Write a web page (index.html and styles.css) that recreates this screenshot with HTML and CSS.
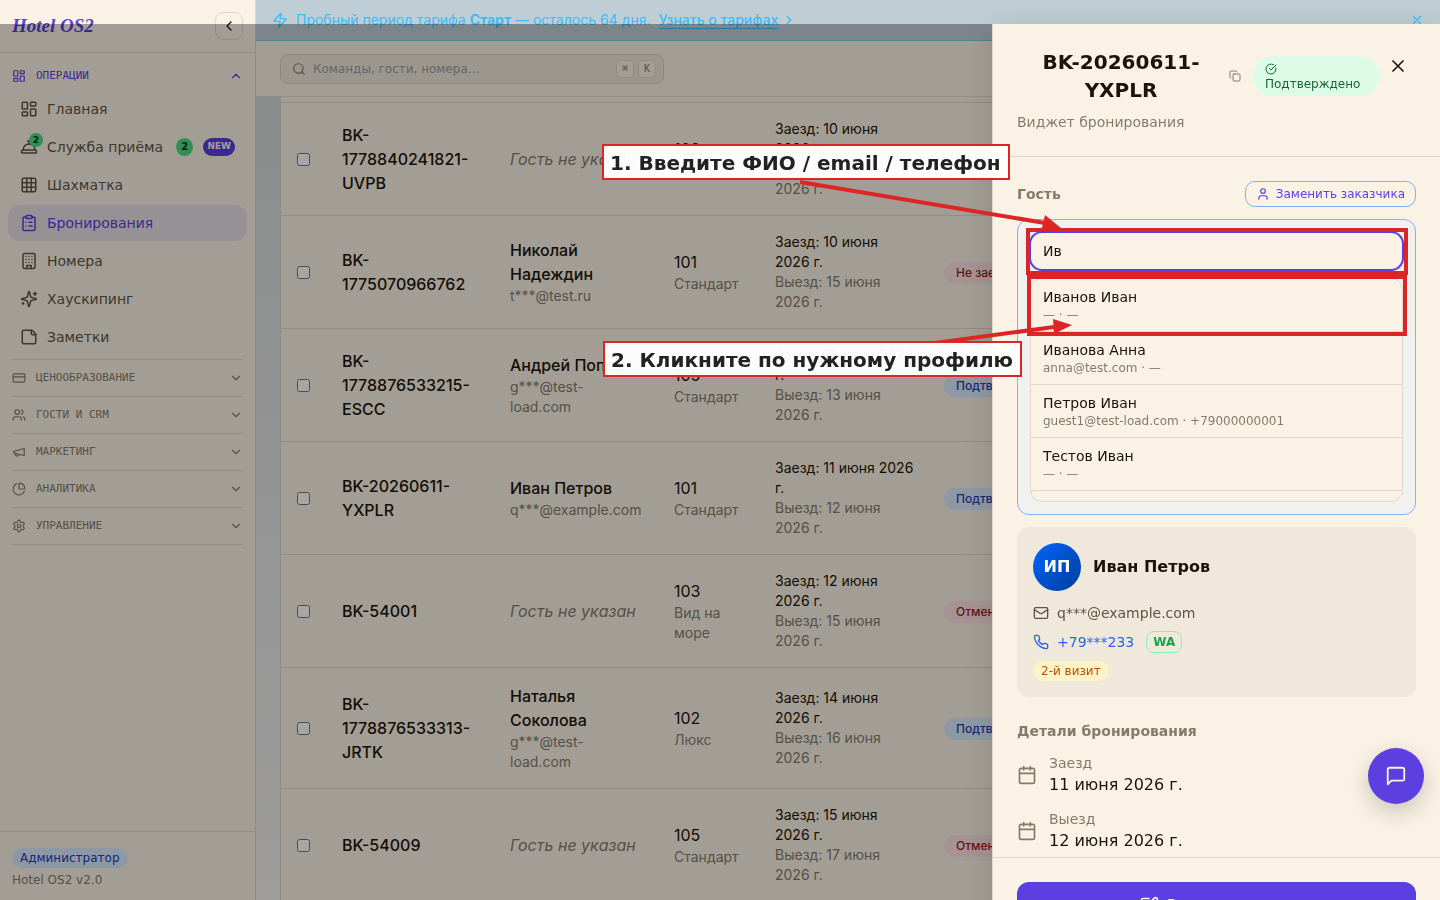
FILE: index.html
```html
<!DOCTYPE html>
<html lang="ru">
	<head>
		<meta charset="utf-8">
		<meta name="viewport" content="width=device-width, initial-scale=1">
		<title>Hotel OS2 - Бронирования</title>
		<link rel="stylesheet" href="styles.css">
	</head>
	<body>
		<svg class="sprite" aria-hidden="true">
			<symbol id="i-dash" viewBox="0 0 24 24"><rect x="3" y="3" width="7" height="9" rx="1"/><rect x="14" y="3" width="7" height="5" rx="1"/><rect x="14" y="12" width="7" height="9" rx="1"/><rect x="3" y="16" width="7" height="5" rx="1"/></symbol>
			<symbol id="i-bell" viewBox="0 0 24 24"><path d="M3 20a1 1 0 0 1-1-1v-1a2 2 0 0 1 2-2h16a2 2 0 0 1 2 2v1a1 1 0 0 1-1 1Z"/><path d="M20 16a8 8 0 1 0-16 0"/><path d="M12 4v4"/><path d="M10 4h4"/></symbol>
			<symbol id="i-grid" viewBox="0 0 24 24"><rect x="3" y="3" width="18" height="18" rx="2"/><path d="M3 9h18M3 15h18M9 3v18M15 3v18"/></symbol>
			<symbol id="i-clip" viewBox="0 0 24 24"><rect x="8" y="2" width="8" height="4" rx="1"/><path d="M16 4h2a2 2 0 0 1 2 2v14a2 2 0 0 1-2 2H6a2 2 0 0 1-2-2V6a2 2 0 0 1 2-2h2"/><path d="M12 11h4M12 16h4M8 11h.01M8 16h.01"/></symbol>
			<symbol id="i-build" viewBox="0 0 24 24"><rect x="4" y="2" width="16" height="20" rx="2"/><path d="M9 22v-4h6v4M8 6h.01M16 6h.01M12 6h.01M12 10h.01M12 14h.01M16 10h.01M16 14h.01M8 10h.01M8 14h.01"/></symbol>
			<symbol id="i-spark" viewBox="0 0 24 24"><path d="M9.937 15.5A2 2 0 0 0 8.5 14.063l-6.135-1.582a.5.5 0 0 1 0-.962L8.5 9.936A2 2 0 0 0 9.937 8.5l1.582-6.135a.5.5 0 0 1 .963 0L14.063 8.5A2 2 0 0 0 15.5 9.937l6.135 1.581a.5.5 0 0 1 0 .964L15.5 14.063a2 2 0 0 0-1.437 1.437l-1.582 6.135a.5.5 0 0 1-.963 0z"/><path d="M20 3v4M22 5h-4M4 17v2M5 18H3"/></symbol>
			<symbol id="i-note" viewBox="0 0 24 24"><path d="M16 3H5a2 2 0 0 0-2 2v14a2 2 0 0 0 2 2h14a2 2 0 0 0 2-2V8Z"/><path d="M15 3v4a2 2 0 0 0 2 2h4"/></symbol>
			<symbol id="i-card" viewBox="0 0 24 24"><rect x="2" y="5" width="20" height="14" rx="2"/><path d="M2 10h20"/></symbol>
			<symbol id="i-users" viewBox="0 0 24 24"><path d="M16 21v-2a4 4 0 0 0-4-4H6a4 4 0 0 0-4 4v2"/><circle cx="9" cy="7" r="4"/><path d="M22 21v-2a4 4 0 0 0-3-3.87M16 3.13a4 4 0 0 1 0 7.75"/></symbol>
			<symbol id="i-mega" viewBox="0 0 24 24"><path d="m3 11 18-5v12L3 14v-3z"/><path d="M11.6 16.8a3 3 0 1 1-5.8-1.6"/></symbol>
			<symbol id="i-pie" viewBox="0 0 24 24"><path d="M21 12c.552 0 1.005-.449.95-.998a10 10 0 0 0-8.953-8.951c-.55-.055-.998.398-.998.95v8a1 1 0 0 0 1 1z"/><path d="M21.21 15.89A10 10 0 1 1 8 2.83"/></symbol>
			<symbol id="i-gear" viewBox="0 0 24 24"><path d="M12.22 2h-.44a2 2 0 0 0-2 2v.18a2 2 0 0 1-1 1.73l-.43.25a2 2 0 0 1-2 0l-.15-.08a2 2 0 0 0-2.73.73l-.22.38a2 2 0 0 0 .73 2.73l.15.1a2 2 0 0 1 1 1.72v.51a2 2 0 0 1-1 1.74l-.15.09a2 2 0 0 0-.73 2.73l.22.38a2 2 0 0 0 2.73.73l.15-.08a2 2 0 0 1 2 0l.43.25a2 2 0 0 1 1 1.73V20a2 2 0 0 0 2 2h.44a2 2 0 0 0 2-2v-.18a2 2 0 0 1 1-1.73l.43-.25a2 2 0 0 1 2 0l.15.08a2 2 0 0 0 2.73-.73l.22-.39a2 2 0 0 0-.73-2.73l-.15-.08a2 2 0 0 1-1-1.74v-.5a2 2 0 0 1 1-1.74l.15-.09a2 2 0 0 0 .73-2.73l-.22-.38a2 2 0 0 0-2.73-.73l-.15.08a2 2 0 0 1-2 0l-.43-.25a2 2 0 0 1-1-1.73V4a2 2 0 0 0-2-2z"/><circle cx="12" cy="12" r="3"/></symbol>
			<symbol id="i-down" viewBox="0 0 24 24"><path d="m6 9 6 6 6-6"/></symbol>
			<symbol id="i-up" viewBox="0 0 24 24"><path d="m18 15-6-6-6 6"/></symbol>
			<symbol id="i-left" viewBox="0 0 24 24"><path d="m15 18-6-6 6-6"/></symbol>
			<symbol id="i-right" viewBox="0 0 24 24"><path d="m9 18 6-6-6-6"/></symbol>
			<symbol id="i-zap" viewBox="0 0 24 24"><path d="M4 14a1 1 0 0 1-.78-1.63l9.9-10.2a.5.5 0 0 1 .86.46l-1.92 6.02A1 1 0 0 0 13 10h7a1 1 0 0 1 .78 1.63l-9.9 10.2a.5.5 0 0 1-.86-.46l1.92-6.02A1 1 0 0 0 11 14z"/></symbol>
			<symbol id="i-x" viewBox="0 0 24 24"><path d="M18 6 6 18M6 6l12 12"/></symbol>
			<symbol id="i-search" viewBox="0 0 24 24"><circle cx="11" cy="11" r="8"/><path d="m21 21-4.3-4.3"/></symbol>
			<symbol id="i-copy" viewBox="0 0 24 24"><rect x="8" y="8" width="14" height="14" rx="2"/><path d="M4 16c-1.1 0-2-.9-2-2V4c0-1.1.9-2 2-2h10c1.1 0 2 .9 2 2"/></symbol>
			<symbol id="i-check" viewBox="0 0 24 24"><path d="M21.801 10A10 10 0 1 1 17 3.335"/><path d="m9 11 3 3L22 4"/></symbol>
			<symbol id="i-user" viewBox="0 0 24 24"><path d="M19 21v-2a4 4 0 0 0-4-4H9a4 4 0 0 0-4 4v2"/><circle cx="12" cy="7" r="4"/></symbol>
			<symbol id="i-mail" viewBox="0 0 24 24"><rect x="2" y="4" width="20" height="16" rx="2"/><path d="m22 7-8.97 5.7a1.94 1.94 0 0 1-2.06 0L2 7"/></symbol>
			<symbol id="i-phone" viewBox="0 0 24 24"><path d="M22 16.92v3a2 2 0 0 1-2.18 2 19.79 19.79 0 0 1-8.63-3.07 19.5 19.5 0 0 1-6-6 19.79 19.79 0 0 1-3.07-8.67A2 2 0 0 1 4.11 2h3a2 2 0 0 1 2 1.72 12.84 12.84 0 0 0 .7 2.81 2 2 0 0 1-.45 2.11L8.09 9.91a16 16 0 0 0 6 6l1.27-1.27a2 2 0 0 1 2.11-.45 12.84 12.84 0 0 0 2.81.7A2 2 0 0 1 22 16.92z"/></symbol>
			<symbol id="i-cal" viewBox="0 0 24 24"><path d="M8 2v4M16 2v4M3 10h18"/><rect x="3" y="4" width="18" height="18" rx="2"/></symbol>
			<symbol id="i-pen" viewBox="0 0 24 24"><path d="M12 3H5a2 2 0 0 0-2 2v14a2 2 0 0 0 2 2h14a2 2 0 0 0 2-2v-7"/><path d="M18.375 2.625a1 1 0 0 1 3 3l-9.013 9.014a2 2 0 0 1-.853.505l-2.873.84a.5.5 0 0 1-.62-.62l.84-2.873a2 2 0 0 1 .506-.852z"/></symbol>
			<symbol id="i-chat" viewBox="0 0 24 24"><path d="M21 15a2 2 0 0 1-2 2H7l-4 4V5a2 2 0 0 1 2-2h14a2 2 0 0 1 2 2z"/></symbol>
		</svg>

		<div class="app">
			<aside class="sidebar">
				<div class="brand">
					<a class="logo" href="#">Hotel OS2</a>
					<button class="collapse" aria-label="Свернуть меню"><svg class="icon s16"><use href="#i-left"/></svg></button>
				</div>
				<nav class="menu">
					<div class="section open">
						<button class="section-head"><svg class="icon s14"><use href="#i-dash"/></svg><span>ОПЕРАЦИИ</span><svg class="icon s14"><use href="#i-up"/></svg></button>
						<a class="item" href="#"><svg class="icon s18"><use href="#i-dash"/></svg>Главная</a>
						<a class="item" href="#"><span class="bell"><svg class="icon s18"><use href="#i-bell"/></svg><b class="dot">2</b></span>Служба приёма<b class="count">2</b><b class="new">NEW</b></a>
						<a class="item" href="#"><svg class="icon s18"><use href="#i-grid"/></svg>Шахматка</a>
						<a class="item active" href="#"><svg class="icon s18"><use href="#i-clip"/></svg>Бронирования</a>
						<a class="item" href="#"><svg class="icon s18"><use href="#i-build"/></svg>Номера</a>
						<a class="item" href="#"><svg class="icon s18"><use href="#i-spark"/></svg>Хаускипинг</a>
						<a class="item" href="#"><svg class="icon s18"><use href="#i-note"/></svg>Заметки</a>
					</div>
					<div class="section"><button class="section-head"><svg class="icon s14"><use href="#i-card"/></svg><span>ЦЕНООБРАЗОВАНИЕ</span><svg class="icon s14"><use href="#i-down"/></svg></button></div>
					<div class="section"><button class="section-head"><svg class="icon s14"><use href="#i-users"/></svg><span>ГОСТИ И CRM</span><svg class="icon s14"><use href="#i-down"/></svg></button></div>
					<div class="section"><button class="section-head"><svg class="icon s14"><use href="#i-mega"/></svg><span>МАРКЕТИНГ</span><svg class="icon s14"><use href="#i-down"/></svg></button></div>
					<div class="section"><button class="section-head"><svg class="icon s14"><use href="#i-pie"/></svg><span>АНАЛИТИКА</span><svg class="icon s14"><use href="#i-down"/></svg></button></div>
					<div class="section"><button class="section-head"><svg class="icon s14"><use href="#i-gear"/></svg><span>УПРАВЛЕНИЕ</span><svg class="icon s14"><use href="#i-down"/></svg></button></div>
				</nav>
				<div class="side-foot">
					<span class="role">Администратор</span>
					<span class="version">Hotel OS2 v2.0</span>
				</div>
			</aside>

			<main class="main">
				<div class="trial">
					<svg class="icon s16"><use href="#i-zap"/></svg>
					<p>Пробный период тарифа <b>Старт</b> — осталось 64 дня.</p>
					<a href="#">Узнать о тарифах</a>
					<svg class="icon s14"><use href="#i-right"/></svg>
					<button class="trial-close" aria-label="Закрыть"><svg class="icon s14"><use href="#i-x"/></svg></button>
				</div>
				<header class="topbar">
					<div class="search">
						<svg class="icon s14"><use href="#i-search"/></svg>
						<input type="text" placeholder="Команды, гости, номера…" aria-label="Поиск">
						<kbd>⌘</kbd><kbd>K</kbd>
					</div>
				</header>
				<div class="content">
					<div class="panel">
						<table class="bookings">
							<colgroup><col class="c-check"><col class="c-code"><col class="c-guest"><col class="c-room"><col class="c-dates"><col></colgroup>
							<tbody>
								<tr>
									<td><input type="checkbox" aria-label="BK-1778840241821-UVPB"></td>
									<td class="code">BK-<wbr>1778840241821-UVPB</td>
									<td><i class="none">Гость не указан</i></td>
									<td>102<small>Люкс</small></td>
									<td class="dates">Заезд: 10 июня 2026 г.<small>Выезд: 12 июня 2026 г.</small></td>
									<td><span class="status bad">Не заезд</span></td>
								</tr>
								<tr>
									<td><input type="checkbox" aria-label="BK-1775070966762"></td>
									<td class="code">BK-<wbr>1775070966762</td>
									<td><span class="guest">Николай Надеждин</span><small>t***@test.ru</small></td>
									<td>101<small>Стандарт</small></td>
									<td class="dates">Заезд: 10 июня 2026 г.<small>Выезд: 15 июня 2026 г.</small></td>
									<td><span class="status bad">Не заезд</span></td>
								</tr>
								<tr>
									<td><input type="checkbox" aria-label="BK-1778876533215-ESCC"></td>
									<td class="code">BK-<wbr>1778876533215-ESCC</td>
									<td><span class="guest">Андрей Попов</span><small>g***@test-load.com</small></td>
									<td>105<small>Стандарт</small></td>
									<td class="dates">Заезд: 11 июня 2026 г.<small>Выезд: 13 июня 2026 г.</small></td>
									<td><span class="status ok">Подтверждено</span></td>
								</tr>
								<tr>
									<td><input type="checkbox" aria-label="BK-20260611-YXPLR"></td>
									<td class="code">BK-20260611-YXPLR</td>
									<td><span class="guest">Иван Петров</span><small>q***@example.com</small></td>
									<td>101<small>Стандарт</small></td>
									<td class="dates">Заезд: 11 июня 2026 г.<small>Выезд: 12 июня 2026 г.</small></td>
									<td><span class="status ok">Подтверждено</span></td>
								</tr>
								<tr>
									<td><input type="checkbox" aria-label="BK-54001"></td>
									<td class="code">BK-54001</td>
									<td><i class="none">Гость не указан</i></td>
									<td>103<small>Вид на море</small></td>
									<td class="dates">Заезд: 12 июня 2026 г.<small>Выезд: 15 июня 2026 г.</small></td>
									<td><span class="status bad">Отменено</span></td>
								</tr>
								<tr>
									<td><input type="checkbox" aria-label="BK-1778876533313-JRTK"></td>
									<td class="code">BK-<wbr>1778876533313-JRTK</td>
									<td><span class="guest">Наталья Соколова</span><small>g***@test-load.com</small></td>
									<td>102<small>Люкс</small></td>
									<td class="dates">Заезд: 14 июня 2026 г.<small>Выезд: 16 июня 2026 г.</small></td>
									<td><span class="status ok">Подтверждено</span></td>
								</tr>
								<tr>
									<td><input type="checkbox" aria-label="BK-54009"></td>
									<td class="code">BK-54009</td>
									<td><i class="none">Гость не указан</i></td>
									<td>105<small>Стандарт</small></td>
									<td class="dates">Заезд: 15 июня 2026 г.<small>Выезд: 17 июня 2026 г.</small></td>
									<td><span class="status bad">Отменено</span></td>
								</tr>
							</tbody>
						</table>
					</div>
				</div>
			</main>
		</div>

		<div class="overlay"></div>

		<section class="drawer" role="dialog" aria-labelledby="bk">
			<header class="drawer-head">
				<div class="head-row">
					<button class="title" id="bk"><span>BK-20260611-YXPLR</span><svg class="icon s12"><use href="#i-copy"/></svg></button>
					<span class="confirmed"><svg class="icon s12"><use href="#i-check"/></svg>Подтверждено</span>
					<button class="close" aria-label="Закрыть"><svg class="icon s20"><use href="#i-x"/></svg></button>
				</div>
				<p>Виджет бронирования</p>
			</header>
			<div class="drawer-body">
				<div class="block-head">
					<h3>Гость</h3>
					<button class="replace"><svg class="icon s14"><use href="#i-user"/></svg>Заменить заказчика</button>
				</div>
				<div class="picker">
					<input type="text" value="Ив" aria-label="ФИО, email или телефон">
					<ul class="matches">
						<li><button>Иванов Иван<small>— · —</small></button></li>
						<li><button>Иванова Анна<small>anna@test.com · —</small></button></li>
						<li><button>Петров Иван<small>guest1@test-load.com · +79000000001</small></button></li>
						<li><button>Тестов Иван<small>— · —</small></button></li>
					</ul>
				</div>
				<div class="card">
					<div class="person"><span class="avatar">ИП</span><strong>Иван Петров</strong></div>
					<div class="contact"><svg class="icon s16"><use href="#i-mail"/></svg>q***@example.com</div>
					<div class="contact"><a class="tel" href="#"><svg class="icon s16"><use href="#i-phone"/></svg>+79***233</a><a class="wa" href="#">WA</a></div>
					<span class="visit">2-й визит</span>
				</div>
				<h3>Детали бронирования</h3>
				<dl class="details">
					<div><svg class="icon s20"><use href="#i-cal"/></svg><dt>Заезд</dt><dd>11 июня 2026 г.</dd></div>
					<div><svg class="icon s20"><use href="#i-cal"/></svg><dt>Выезд</dt><dd>12 июня 2026 г.</dd></div>
				</dl>
			</div>
			<footer class="drawer-foot">
				<button class="primary"><svg class="icon s20"><use href="#i-pen"/></svg>Редактировать</button>
			</footer>
		</section>

		<button class="fab" aria-label="Чат"><svg class="icon s22"><use href="#i-chat"/></svg></button>

		<!-- tutorial callouts, pinned to the drawer edge -->
		<div class="guide">
			<div class="frame frame1"></div>
			<div class="frame frame2"></div>
			<svg class="arrows" viewBox="0 0 840 400">
				<path class="shaft" d="M200 182 L445 223 M335 343 L454 327"/>
				<path class="head" d="M445 215 L461 228 L441 232 Z M453 319 L472 325 L454 334 Z"/>
			</svg>
			<div class="note note1">1. Введите ФИО / email / телефон</div>
			<div class="note note2">2. Кликните по нужному профилю</div>
		</div>
	</body>
</html>
```
FILE: styles.css
```css
* {
  box-sizing: border-box;
}

html, body {
  height: 100%;
}

body {
  margin: 0;
  overflow: hidden;
  font-family: "DejaVu Sans", sans-serif;
  font-size: 14px;
  line-height: 20px;
  color: #1c1409;
  background: linear-gradient(#d0d7d6, #e1e3e4 50%, #f3f1ef);
}

h3, p, ul, dl, dd {
  margin: 0;
  padding: 0;
}

button, input {
  font: inherit;
  color: inherit;
}

button {
  padding: 0;
  border: 0;
  background: none;
  cursor: pointer;
}

a {
  color: inherit;
  text-decoration: none;
}

small {
  display: block;
}

.sprite {
  display: none;
}

.icon {
  flex: none;
  fill: none;
  stroke: currentColor;
  stroke-width: 2;
  stroke-linecap: round;
  stroke-linejoin: round;
}

.s12 { width: 12px; height: 12px; }
.s14 { width: 14px; height: 14px; }
.s16 { width: 16px; height: 16px; }
.s18 { width: 18px; height: 18px; }
.s20 { width: 20px; height: 20px; }
.s22 { width: 22px; height: 22px; }

.app {
  display: flex;
  height: 100%;
}

/* sidebar */

.sidebar {
  display: flex;
  flex-direction: column;
  flex: none;
  width: 256px;
  background: #faf3e5;
  border-right: 1px solid #e0d9c9;
}

.brand {
  display: flex;
  align-items: center;
  justify-content: space-between;
  padding: 12px;
  border-bottom: 1px solid #e0d9c9;
}

.logo {
  font: italic bold 19px/28px "Liberation Serif", serif;
  color: #5b3fe0;
}

.collapse {
  display: flex;
  align-items: center;
  justify-content: center;
  width: 28px;
  height: 28px;
  border: 1px solid #e0d9c9;
  border-radius: 8px;
}

.menu {
  flex: 1;
  padding: 8px 12px;
  color: #5e5546;
}

.section {
  border-bottom: 1px solid #e0d9c9;
}

.section-head {
  display: flex;
  align-items: center;
  gap: 10px;
  width: 100%;
  height: 36px;
  font: 11px/16px "DejaVu Sans Mono", monospace;
  color: #857b6d;
  text-align: left;
}

.section-head span {
  flex: 1;
}

.open {
  padding-bottom: 4px;
}

.open .section-head {
  height: 30px;
  color: #5b3fe0;
}

.item {
  display: flex;
  align-items: center;
  gap: 9px;
  height: 36px;
  margin: 0 -4px 2px;
  padding: 0 12px;
  border-radius: 12px;
  white-space: nowrap;
}

.item:last-child {
  margin-bottom: 0;
}

.active {
  color: #5b3fe0;
  background: #e6dfe3;
}

.bell {
  display: flex;
  position: relative;
}

.dot, .count {
  display: flex;
  align-items: center;
  justify-content: center;
  border-radius: 50%;
  color: #14301f;
  background: #4ade80;
}

.dot {
  position: absolute;
  top: -5px;
  right: -5px;
  width: 14px;
  height: 14px;
  font-size: 9px;
  line-height: 12px;
}

.count {
  width: 18px;
  height: 18px;
  margin-left: 4px;
  font-size: 10px;
}

.new {
  height: 18px;
  margin-left: 1px;
  padding: 0 4px;
  border-radius: 9px;
  font-size: 9px;
  line-height: 16px;
  color: #faf3e5;
  background: #5b3fe0;
}

.side-foot {
  display: flex;
  flex-direction: column;
  align-items: flex-start;
  gap: 4px;
  padding: 16px 12px 12px;
  border-top: 1px solid #e0d9c9;
  font-size: 12px;
  line-height: 16px;
  color: #857b6d;
}

.role {
  padding: 2px 8px;
  border-radius: 10px;
  color: #1e40af;
  background: #dbeafe;
}

/* main */

.main {
  display: flex;
  flex-direction: column;
  flex: 1;
  min-width: 0;
  font-family: Inter, sans-serif;
}

.trial {
  display: flex;
  align-items: center;
  gap: 8px;
  flex: none;
  padding: 10px 16px;
  border-bottom: 1px solid #7cc4e8;
  color: #38bdf8;
  background: #bfcdd4;
}

.trial a {
  font-weight: 500;
  text-decoration: underline;
  text-underline-offset: 3px;
}

.trial a + svg {
  margin-left: -4px;
}

.trial-close {
  display: flex;
  margin-left: auto;
}

.topbar {
  flex: none;
  padding: 13px 24px 12px;
  border-bottom: 1px solid #e0d9c9;
  background: #faf3e5;
}

.search {
  display: flex;
  align-items: center;
  gap: 4px;
  max-width: 384px;
  height: 30px;
  padding: 0 7px 0 11px;
  border: 1px solid #d9d1c0;
  border-radius: 8px;
  font: 12px/16px "DejaVu Sans", sans-serif;
  color: #857b6d;
  background: #efe8da;
}

.search input {
  flex: 1;
  min-width: 0;
  padding: 0 3px;
  border: 0;
  outline: 0;
  background: none;
}

.search input::placeholder {
  color: #9a9ca3;
}

kbd {
  min-width: 18px;
  padding: 0 4px;
  border: 1px solid #e0d9c9;
  border-radius: 4px;
  font: 10px/16px "DejaVu Sans Mono", monospace;
  text-align: center;
  background: #faf3e5;
}

.content {
  flex: 1;
  min-height: 0;
  padding: 0 24px;
  overflow: hidden;
}

.panel {
  padding-top: 5px;
  border: solid #e0d9c9;
  border-width: 0 1px;
  background: #faf3e5;
}

.bookings {
  width: 100%;
  table-layout: fixed;
  border-collapse: separate;
  border-spacing: 0;
  font-size: 16px;
  line-height: 24px;
}

.c-check { width: 45px; }
.c-code { width: 168px; }
.c-guest { width: 164px; }
.c-room { width: 101px; }
.c-dates { width: 169px; }

.bookings td {
  padding: 16px;
  border-top: 1px solid #e0d9c9;
  vertical-align: middle;
}

.bookings input {
  display: block;
  width: 13px;
  height: 13px;
  margin: 0;
}

.bookings small, .bookings .dates {
  font-size: 14px;
  line-height: 20px;
}

.bookings .dates {
  padding-right: 14px;
}

.bookings small, .none {
  color: #857b6d;
}

.code, .guest {
  font-weight: 500;
}

.status {
  display: inline-block;
  padding: 3px 12px;
  border-radius: 11px;
  font-size: 12px;
  font-weight: 500;
  line-height: 16px;
  vertical-align: middle;
}

.bad {
  color: #991b1b;
  background: #ffe0e2;
}

.ok {
  color: #1e40af;
  background: #dbeafe;
}

.overlay {
  position: fixed;
  top: 24px;
  left: 0;
  right: 0;
  bottom: 0;
  background: rgba(0,0,0,.35);
}

/* booking drawer */

.drawer {
  display: flex;
  flex-direction: column;
  position: fixed;
  top: 24px;
  right: 0;
  bottom: -54px;
  width: 448px;
  max-width: 100%;
  border-left: 1px solid #e0d9c9;
  background: #faf3e5;
  box-shadow: 0 8px 32px rgba(0,0,0,.15);
}

.drawer-head {
  padding: 24px;
  border-bottom: 1px solid #e0d9c9;
  color: #857b6d;
}

.head-row {
  display: flex;
  align-items: center;
  margin-bottom: 8px;
}

.title {
  display: flex;
  align-items: center;
  gap: 4px;
  flex: 1;
}

.title span {
  flex: 1;
  font-size: 20px;
  font-weight: bold;
  line-height: 28px;
  color: #1c1409;
}

.confirmed {
  width: 127px;
  margin-left: 12px;
  padding: 4px 12px;
  border-radius: 20px;
  font-size: 12px;
  line-height: 16px;
  color: #166534;
  background: #dcfce7;
}

.confirmed svg {
  display: block;
  margin: 3px 0 1px;
}

.close {
  display: flex;
  align-items: center;
  justify-content: center;
  align-self: flex-start;
  width: 36px;
  height: 36px;
  color: #1c1409;
}

.drawer-body {
  flex: 1;
  min-height: 0;
  padding: 24px;
  overflow: hidden;
}

.drawer-body h3 {
  font-size: 14px;
  line-height: 20px;
  color: #857b6d;
}

.block-head {
  display: flex;
  align-items: center;
  justify-content: space-between;
  margin-bottom: 12px;
}

.replace {
  display: flex;
  align-items: center;
  gap: 6px;
  padding: 4px 10px;
  border: 1px solid #82b1fa;
  border-radius: 10px;
  font-size: 12px;
  line-height: 16px;
  color: #5b3fe0;
}

.picker {
  padding: 12px;
  border: 1px solid #82b1fa;
  border-radius: 12px;
  background: #f1f1ef;
}

.picker input {
  display: block;
  width: 100%;
  height: 38px;
  padding: 0 13px;
  border: 0;
  border-radius: 12px;
  outline: 2px solid #5b3fe0;
  outline-offset: -1px;
  background: #faf3e5;
}

.matches {
  margin-top: 8px;
  padding-bottom: 10px;
  border: 1px solid #e0d9c9;
  border-radius: 12px;
  list-style: none;
  overflow: hidden;
  background: #faf3e5;
}

.matches li {
  border-bottom: 1px solid #e0d9c9;
}

.matches button {
  width: 100%;
  padding: 8px 12px;
  text-align: left;
}

.matches small {
  font-size: 12px;
  line-height: 16px;
  color: #857b6d;
}

.card {
  display: flex;
  flex-direction: column;
  gap: 8px;
  margin: 12px 0 24px;
  padding: 16px;
  border-radius: 12px;
  background: #f0e8db;
}

.person {
  display: flex;
  align-items: center;
  gap: 12px;
  margin-bottom: 4px;
  font-size: 16px;
}

.avatar {
  display: flex;
  align-items: center;
  justify-content: center;
  width: 48px;
  height: 48px;
  border-radius: 50%;
  font-weight: bold;
  color: #fff;
  background: linear-gradient(135deg, #0066ff, #003d99);
}

.contact, .tel {
  display: flex;
  align-items: center;
  gap: 8px;
  color: #5e5546;
}

.tel {
  color: #2563eb;
}

.wa {
  margin-left: 4px;
  padding: 2px 6px;
  border: 1px solid #86efac;
  border-radius: 8px;
  font-size: 12px;
  font-weight: bold;
  line-height: 16px;
  color: #16a34a;
}

.visit {
  align-self: flex-start;
  padding: 2px 8px;
  border-radius: 10px;
  font-size: 12px;
  line-height: 16px;
  color: #b45309;
  background: #fef3c7;
}

.details {
  display: grid;
  gap: 12px;
  margin-top: 12px;
}

.details div {
  display: grid;
  grid-template-columns: 20px 1fr;
  column-gap: 12px;
  align-items: center;
}

.details svg {
  grid-row: span 2;
}

.details svg, .details dt {
  color: #857b6d;
}

.details dd {
  font-size: 16px;
  line-height: 24px;
}

.drawer-foot {
  padding: 24px;
  border-top: 1px solid #e0d9c9;
}

.primary {
  display: flex;
  align-items: center;
  justify-content: center;
  gap: 8px;
  width: 100%;
  padding: 12px;
  border-radius: 12px;
  font-size: 16px;
  line-height: 24px;
  color: #faf3e5;
  background: #5b3fe0;
}

.fab {
  display: flex;
  align-items: center;
  justify-content: center;
  position: fixed;
  right: 16px;
  bottom: 96px;
  width: 56px;
  height: 56px;
  border-radius: 50%;
  color: #faf3e5;
  background: #5b3fe0;
  box-shadow: 0 8px 24px rgba(0,0,0,.2);
}

/* callouts */

.guide {
  position: fixed;
  top: 0;
  right: 0;
  width: 840px;
  height: 400px;
  pointer-events: none;
}

.guide > * {
  position: absolute;
}

.frame {
  border: 4px solid #dc2626;
}

.frame1 {
  top: 228px;
  left: 426px;
  width: 382px;
  height: 47px;
}

.frame2 {
  top: 275px;
  left: 427px;
  width: 380px;
  height: 61px;
}

.arrows {
  top: 0;
  left: 0;
  width: 840px;
  height: 400px;
}

.shaft {
  fill: none;
  stroke: #dc2626;
  stroke-width: 4;
}

.head {
  fill: #dc2626;
}

.note {
  padding: 3px 7px 0 6px;
  border: 2px solid #dc2626;
  font-size: 20px;
  font-weight: bold;
  line-height: 29px;
  white-space: nowrap;
  color: #222;
  background: rgba(255,255,255,.96);
}

.note1 {
  top: 144px;
  left: 2px;
}

.note2 {
  top: 341px;
  left: 3px;
}
```
